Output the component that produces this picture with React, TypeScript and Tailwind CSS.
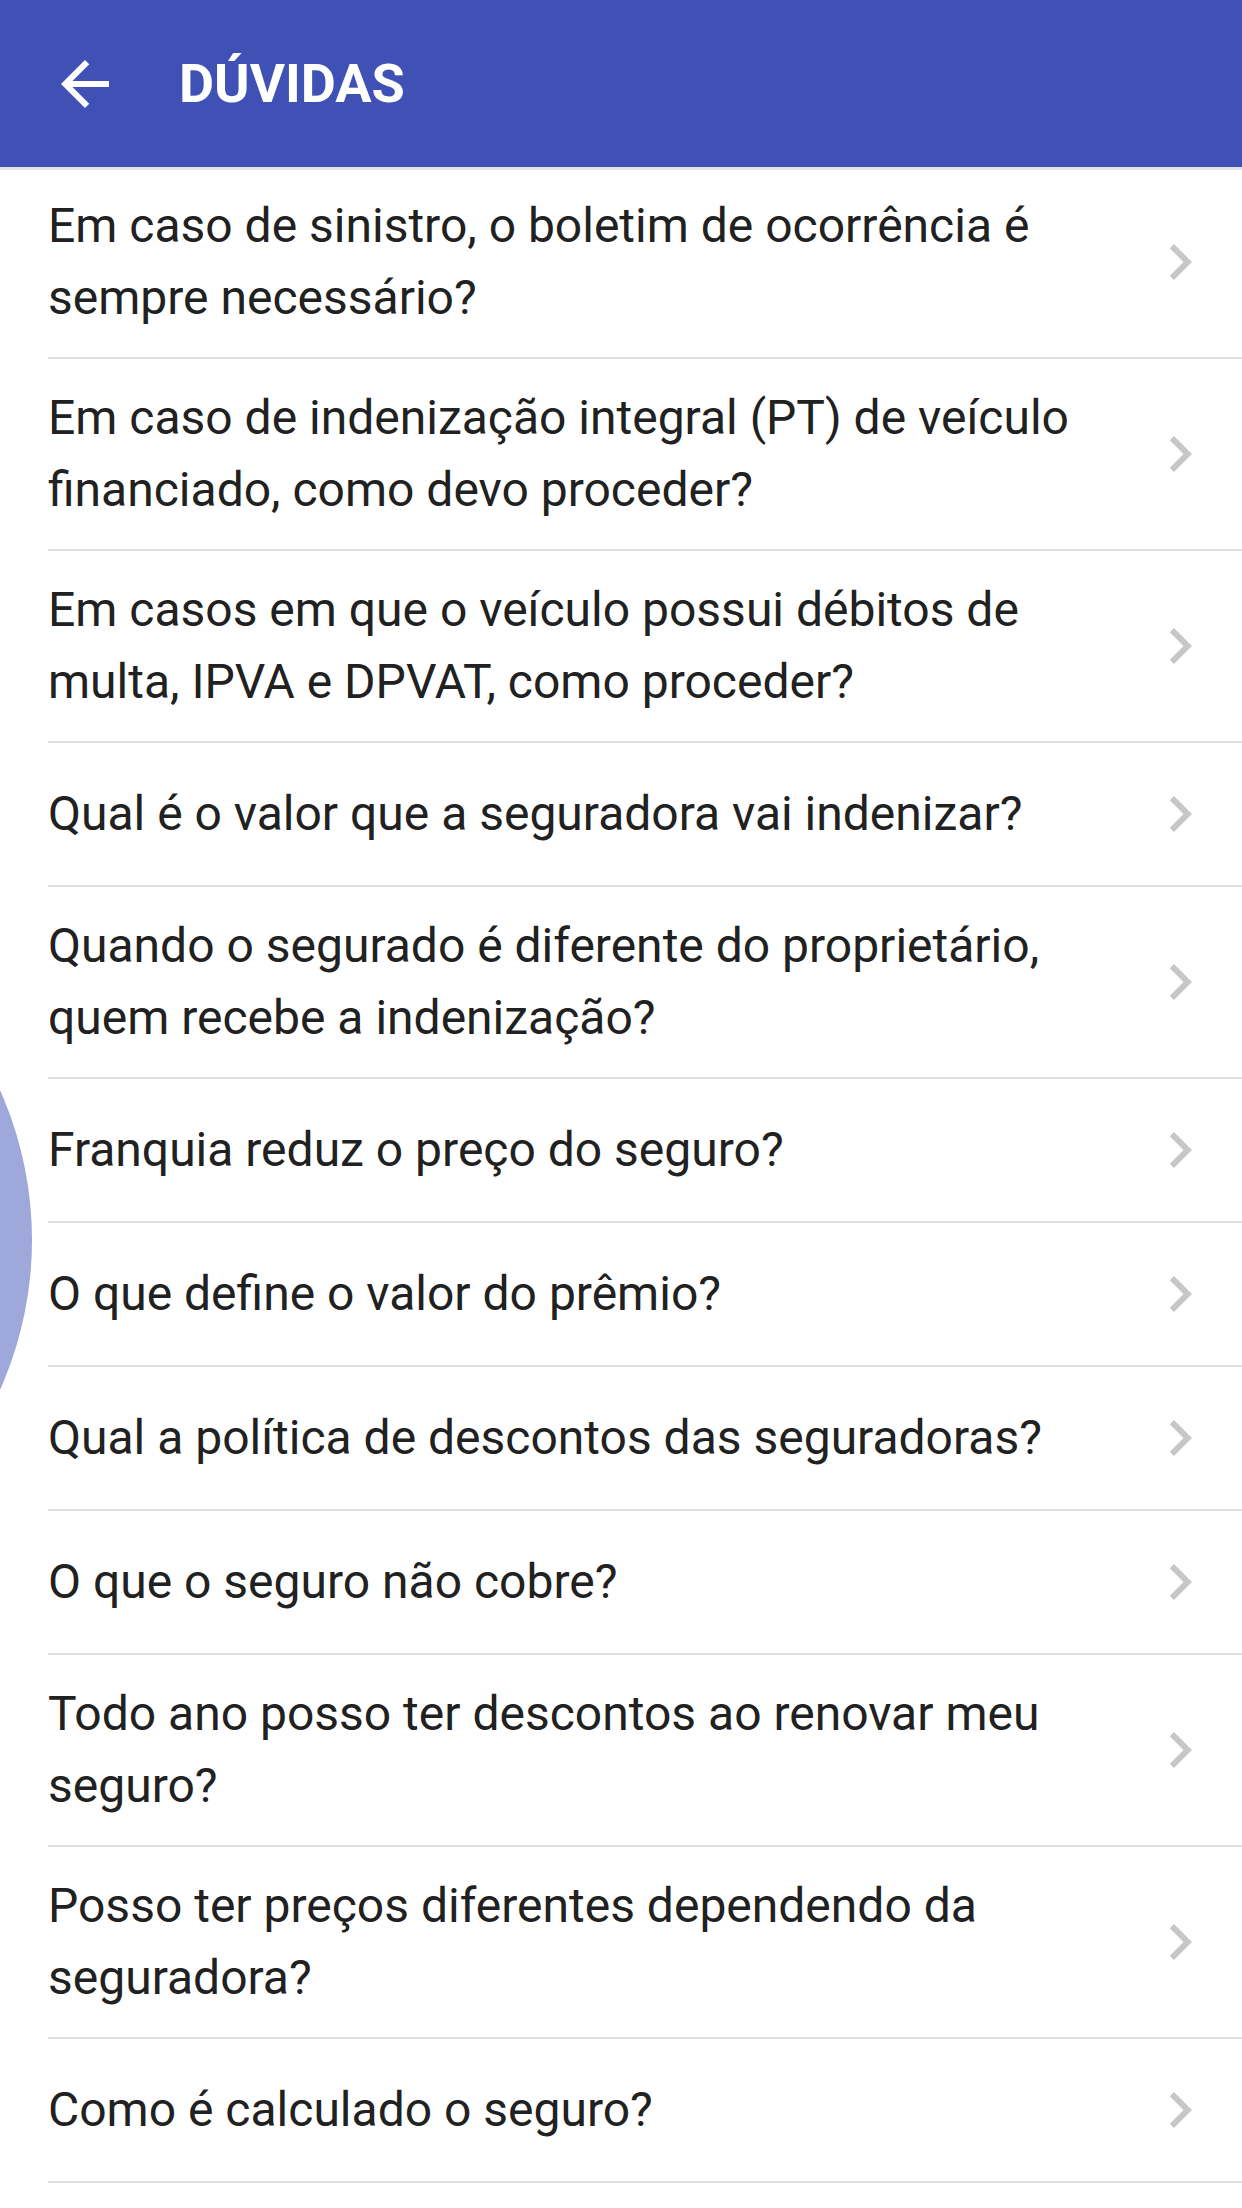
import React from "react";

const items: string[] = [
  "Em caso de sinistro, o boletim de ocorrência é sempre necessário?",
  "Em caso de indenização integral (PT) de veículo financiado, como devo proceder?",
  "Em casos em que o veículo possui débitos de multa, IPVA e DPVAT, como proceder?",
  "Qual é o valor que a seguradora vai indenizar?",
  "Quando o segurado é diferente do proprietário, quem recebe a indenização?",
  "Franquia reduz o preço do seguro?",
  "O que define o valor do prêmio?",
  "Qual a política de descontos das seguradoras?",
  "O que o seguro não cobre?",
  "Todo ano posso ter descontos ao renovar meu seguro?",
  "Posso ter preços diferentes dependendo da seguradora?",
  "Como é calculado o seguro?",
];

function ArrowBack() {
  return (
    <svg width="72" height="72" viewBox="0 0 24 24" fill="white">
      <path d="M20 11H7.83l5.59-5.59L12 4l-8 8 8 8 1.41-1.41L7.83 13H20v-2z" />
    </svg>
  );
}

function Chevron() {
  return (
    <svg width="72" height="72" viewBox="0 0 24 24" fill="#c7c7c7">
      <path d="M10 6L8.59 7.41 13.17 12l-4.58 4.59L10 18l6-6z" />
    </svg>
  );
}

export default function App() {
  return (
    <div
      className="relative w-[1242px] h-[2208px] overflow-hidden bg-white"
      style={{ fontFamily: "Roboto, 'Noto Sans', sans-serif" }}
    >
      <header className="relative z-10 h-[167px] bg-[#3f51b5] flex items-center shadow-[0_3px_0_#e2e2e2]">
        <div className="ml-[49px] w-[72px] h-[72px]">
          <ArrowBack />
        </div>
        <h1 className="ml-[58px] text-[54px] font-bold text-white leading-none">
          DÚVIDAS
        </h1>
      </header>

      <ul className="pl-[48px]">
        {items.map((t) => (
          <li
            key={t}
            className="flex items-center min-h-[144px] py-[23px] border-b-2 border-[#e0e0e0]"
          >
            <span className="flex-1 text-[48px] leading-[72px] text-[#212121]">
              {t}
            </span>
            <span className="w-[72px] h-[72px] mr-[26px] shrink-0">
              <Chevron />
            </span>
          </li>
        ))}
      </ul>

      <div className="absolute left-[-702px] top-[873px] w-[734px] h-[734px] rounded-full bg-[#9fa8da]" />
    </div>
  );
}
